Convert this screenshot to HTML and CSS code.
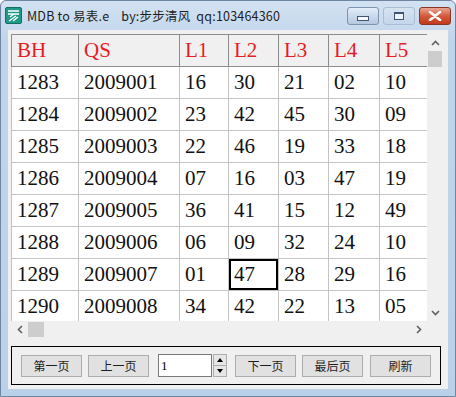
FILE: index.html
```html
<!DOCTYPE html>
<html lang="zh-CN">

<head>
    <meta charset="UTF-8">
    <title>MDB to 易表.e</title>
    <link rel="stylesheet" href="styles.css">
</head>

<body>

    <div class="window">
        <div class="titlebar">
            <svg class="app-icon" width="17" height="17" viewBox="0 0 17 17">
                <rect x="0.5" y="0.5" width="16" height="16" rx="1.5" fill="#1f9a86" stroke="#127060" />
                <path d="M3 4h11M3 7h11M5 10l4-3M4 14l7-5M8 14l5-4" stroke="#fff" stroke-width="1.4" fill="none" />
            </svg>
            <span class="title">MDB to 易表.e&nbsp;&nbsp;&nbsp; by:步步清风&nbsp;&nbsp;qq:103464360</span>
            <div class="controls">
                <span class="ctl ctl-min"><i></i></span>
                <span class="ctl ctl-max"><i></i></span>
                <span class="ctl ctl-close">
                    <svg width="14" height="10" viewBox="0 0 14 10">
                        <path d="M2 1l10 8M12 1l-10 8" stroke="#fff" stroke-width="2.6" stroke-linecap="round" />
                    </svg>
                </span>
            </div>
        </div>

        <div class="client">
            <div class="grid-box">
                <div class="grid-view">
                    <table class="grid">
                        <colgroup>
                            <col style="width:67px">
                            <col style="width:101px">
                            <col style="width:49px">
                            <col style="width:50px">
                            <col style="width:50px">
                            <col style="width:51px">
                            <col style="width:60px">
                        </colgroup>
                        <thead>
                            <tr>
                                <th>BH</th>
                                <th>QS</th>
                                <th>L1</th>
                                <th>L2</th>
                                <th>L3</th>
                                <th>L4</th>
                                <th>L5</th>
                            </tr>
                        </thead>
                        <tbody id="rows"></tbody>
                    </table>
                </div>
                <div class="vscroll">
                    <span class="arrow">
                        <svg width="9" height="6" viewBox="0 0 9 6"><path d="M1 5l3.5-3.5L8 5" stroke="#606060" stroke-width="1.6" fill="none" /></svg>
                    </span>
                    <span class="vthumb"></span>
                    <span class="track"></span>
                    <span class="arrow">
                        <svg width="9" height="6" viewBox="0 0 9 6"><path d="M1 1l3.5 3.5L8 1" stroke="#606060" stroke-width="1.6" fill="none" /></svg>
                    </span>
                </div>
                <div class="hscroll">
                    <span class="arrow">
                        <svg width="6" height="9" viewBox="0 0 6 9"><path d="M5 1L1.5 4.5 5 8" stroke="#606060" stroke-width="1.6" fill="none" /></svg>
                    </span>
                    <span class="hthumb"></span>
                    <span class="track"></span>
                    <span class="arrow">
                        <svg width="6" height="9" viewBox="0 0 6 9"><path d="M1 1l3.5 3.5L1 8" stroke="#606060" stroke-width="1.6" fill="none" /></svg>
                    </span>
                </div>
                <div class="corner"></div>
            </div>

            <div class="pager">
                <button class="btn">第一页</button>
                <button class="btn">上一页</button>
                <div class="spin">
                    <input class="spin-input" type="text" value="1">
                    <div class="spin-btns">
                        <span class="spin-btn"><i class="up"></i></span>
                        <span class="spin-btn"><i class="down"></i></span>
                    </div>
                </div>
                <button class="btn">下一页</button>
                <button class="btn">最后页</button>
                <button class="btn">刷新</button>
            </div>
        </div>
    </div>

    <script>
        var data = [
            ["1283", "2009001", "16", "30", "21", "02", "10"],
            ["1284", "2009002", "23", "42", "45", "30", "09"],
            ["1285", "2009003", "22", "46", "19", "33", "18"],
            ["1286", "2009004", "07", "16", "03", "47", "19"],
            ["1287", "2009005", "36", "41", "15", "12", "49"],
            ["1288", "2009006", "06", "09", "32", "24", "10"],
            ["1289", "2009007", "01", "47", "28", "29", "16"],
            ["1290", "2009008", "34", "42", "22", "13", "05"]
        ];
        var tbody = document.getElementById("rows");
        data.forEach(function (row, r) {
            var tr = document.createElement("tr");
            row.forEach(function (val, c) {
                var td = document.createElement("td");
                td.textContent = val;
                // current cell of the grid
                if (r === 6 && c === 3) td.className = "current";
                tr.appendChild(td);
            });
            tbody.appendChild(tr);
        });
    </script>
</body>

</html>
```

FILE: styles.css
```css
body {
    margin: 0;
    font-family: "Noto Sans CJK SC", "Noto Sans", sans-serif;
}

.window {
    width: 456px;
    height: 397px;
    box-sizing: border-box;
    background: linear-gradient(#d2e2f2, #c1d5ea 40px, #bcd1e8);
    border: 1px solid #6d87a3;
    border-radius: 6px 6px 0 0;
    display: flex;
    flex-direction: column;
}

/* title bar */
.titlebar {
    height: 29px;
    display: flex;
    align-items: center;
    padding-left: 4px;
}

.app-icon {
    flex: none;
    margin-top: -1px;
}

.title {
    margin-left: 5px;
    font-size: 12.5px;
    letter-spacing: 0.2px;
    color: #1e1e1e;
    white-space: nowrap;
    flex: 1;
}

.controls {
    display: flex;
    align-self: flex-start;
    margin-top: 6px;
    margin-right: 4px;
    gap: 4px;
}

.ctl {
    width: 30px;
    height: 16px;
    border: 1px solid #7d93ad;
    border-radius: 3px;
    background: linear-gradient(#e3edf8, #c9daec 50%, #b4c9e1);
    display: flex;
    align-items: center;
    justify-content: center;
}

.ctl-max {
    border-color: #aabdd3;
    background: linear-gradient(#d6e3f1, #c4d6ea);
}

.ctl-min i {
    width: 10px;
    height: 3px;
    margin-top: 4px;
    background: #f4f8fc;
    border: 1px solid #3f5570;
}

.ctl-max i {
    width: 8px;
    height: 5px;
    border: 1px solid #3f5570;
    border-top-width: 2px;
    background: #eef4fa;
}

.ctl-close {
    border-color: #8a3526;
    background: linear-gradient(#e8a593, #d35a3c 50%, #c23a1d);
}

/* client area */
.client {
    flex: 1;
    margin: 0 7px 7px;
    background: #f0f0f0;
    padding: 4px 4px 0 3px;
}

.grid-box {
    width: 433px;
    height: 304px;
    display: grid;
    grid-template-columns: 416px 17px;
    grid-template-rows: 287px 17px;
    background: #fff;
}

.grid-view {
    overflow: hidden;
}

.grid {
    border-collapse: collapse;
    table-layout: fixed;
    width: 428px;
    font-family: "Liberation Serif", "Times New Roman", serif;
    font-size: 21px;
}

.grid th,
.grid td {
    height: 31px;
    padding: 0 0 0 5px;
    text-align: left;
    white-space: nowrap;
    line-height: 31px;
}

.grid th {
    background: #f0f0f0;
    color: #e81c24;
    font-weight: normal;
    border: 1px solid #8c8c8c;
}

.grid td {
    color: #111;
    border: 1px solid #c4c4c4;
}

.grid td.current {
    box-shadow: inset 0 0 0 2px #000;
}

/* scroll bars */
.vscroll,
.hscroll {
    background: #f0f0f0;
    display: flex;
}

.vscroll {
    flex-direction: column;
}

.arrow {
    flex: none;
    width: 17px;
    height: 17px;
    display: flex;
    align-items: center;
    justify-content: center;
}

.track {
    flex: 1;
}

.vthumb {
    height: 16px;
    margin: 0 2px 0 1px;
    background: #cdcdcd;
}

.hthumb {
    width: 16px;
    margin: 1px 0 1px;
    background: #cdcdcd;
}

.corner {
    background: #f0f0f0;
}

/* pager */
.pager {
    margin-top: 8px;
    width: 430px;
    height: 39px;
    box-sizing: border-box;
    border: 1px solid #000;
    display: flex;
    align-items: center;
    padding-left: 9px;
}

.btn {
    width: 61px;
    height: 22px;
    margin-right: 6px;
    padding: 0;
    border: 1px solid #adadad;
    background: #e1e1e1;
    font-family: "Noto Sans CJK SC", sans-serif;
    font-size: 12px;
    color: #1e1e1e;
}

.btn:nth-of-type(4) {
    margin-right: 7px;
}

.spin {
    display: flex;
    margin: 0 8px 0 3px;
}

.spin-input {
    width: 54px;
    height: 23px;
    box-sizing: border-box;
    border: 1px solid #7a7a7a;
    padding: 0 2px;
    font-family: "Liberation Serif", serif;
    font-size: 13px;
    background: #fff;
}

.spin-btns {
    display: flex;
    flex-direction: column;
    width: 14px;
    margin-left: 1px;
    border: 1px solid #adadad;
    box-sizing: border-box;
    height: 23px;
}

.spin-btn {
    flex: 1;
    background: #e6e6e6;
    display: flex;
    align-items: center;
    justify-content: center;
}

.spin-btn + .spin-btn {
    border-top: 1px solid #adadad;
}

.spin-btn i {
    width: 0;
    height: 0;
    border-left: 3px solid transparent;
    border-right: 3px solid transparent;
}

.spin-btn i.up {
    border-bottom: 4px solid #000;
}

.spin-btn i.down {
    border-top: 4px solid #000;
}
```
